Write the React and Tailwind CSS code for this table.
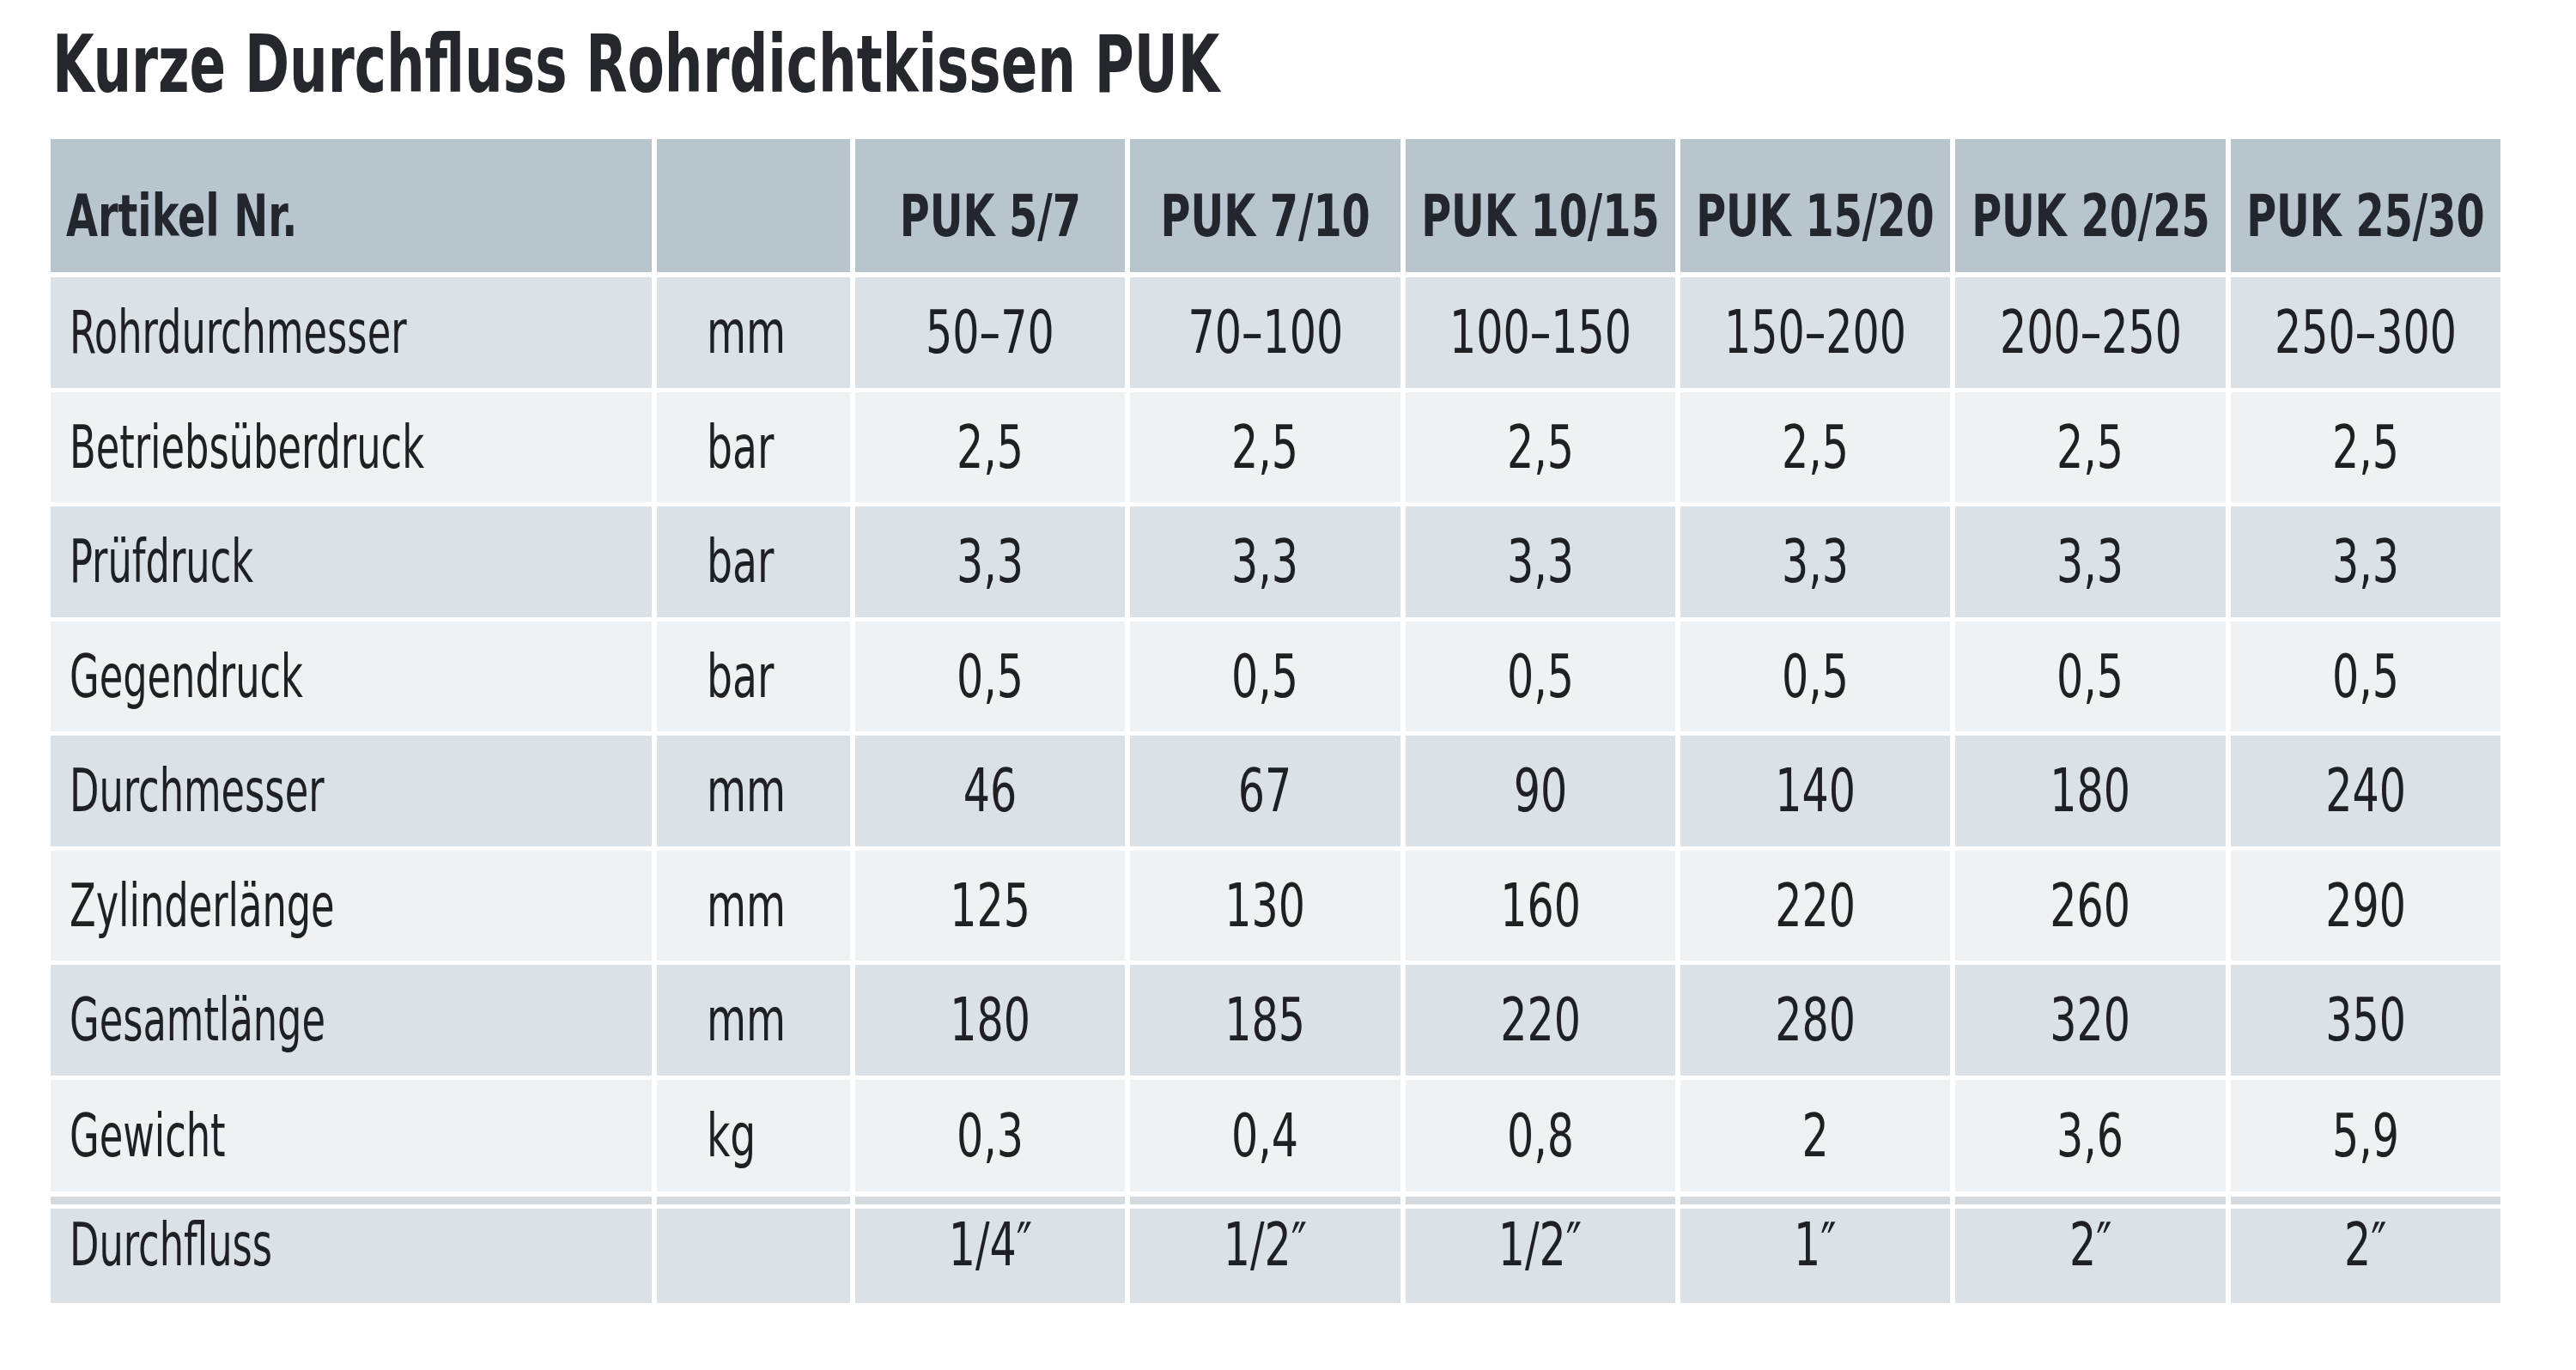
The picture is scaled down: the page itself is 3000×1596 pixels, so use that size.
import React from "react";

const cols = ["PUK 5/7", "PUK 7/10", "PUK 10/15", "PUK 15/20", "PUK 20/25", "PUK 25/30"];

const rows = [
  { label: "Rohrdurchmesser", unit: "mm", vals: ["50–70", "70–100", "100–150", "150–200", "200–250", "250–300"], dark: true },
  { label: "Betriebsüberdruck", unit: "bar", vals: ["2,5", "2,5", "2,5", "2,5", "2,5", "2,5"], dark: false },
  { label: "Prüfdruck", unit: "bar", vals: ["3,3", "3,3", "3,3", "3,3", "3,3", "3,3"], dark: true },
  { label: "Gegendruck", unit: "bar", vals: ["0,5", "0,5", "0,5", "0,5", "0,5", "0,5"], dark: false },
  { label: "Durchmesser", unit: "mm", vals: ["46", "67", "90", "140", "180", "240"], dark: true },
  { label: "Zylinderlänge", unit: "mm", vals: ["125", "130", "160", "220", "260", "290"], dark: false },
  { label: "Gesamtlänge", unit: "mm", vals: ["180", "185", "220", "280", "320", "350"], dark: true },
  { label: "Gewicht", unit: "kg", vals: ["0,3", "0,4", "0,8", "2", "3,6", "5,9"], dark: false },
];

const FONT = { fontFamily: '"Liberation Sans Narrow", "DejaVu Sans Condensed", "Liberation Sans", sans-serif' };

function Row({ label, unit, vals, dark, h, extra = "" }) {
  const bg = dark ? "bg-[#dae2e7]" : "bg-[#eef2f5]";
  return (
    <div className={`grid grid-cols-[700px_225px_repeat(6,minmax(0,1fr))] gap-x-[6px] ${h}`}>
      <div className={`${bg} flex items-center pl-[22px] whitespace-nowrap ${extra}`}>
        <span className="inline-block origin-left scale-x-[0.71]">{label}</span>
      </div>
      <div className={`${bg} flex items-center pl-[58px] whitespace-nowrap ${extra}`}>
        <span className="inline-block origin-left scale-x-[0.75]">{unit}</span>
      </div>
      {vals.map((v, i) => (
        <div key={i} className={`${bg} flex items-center justify-center whitespace-nowrap ${extra}`}>
          <span className="inline-block shrink-0 origin-center scale-x-[0.78]">{v}</span>
        </div>
      ))}
    </div>
  );
}

export default function App() {
  return (
    <div className="w-[3000px] h-[1596px] bg-white text-[#1e2024]" style={FONT}>
      <h1 className="pl-[61px] pt-[29px] text-[93px] leading-none font-bold text-[#24272b] whitespace-nowrap">
        <span className="inline-block origin-left scale-x-[0.75]">Kurze Durchfluss Rohrdichtkissen PUK</span>
      </h1>
      <div className="ml-[59px] mt-[40px] w-[2853px] flex flex-col text-[70px] leading-none">
        <div className="grid grid-cols-[700px_225px_repeat(6,minmax(0,1fr))] gap-x-[6px] h-[155px] font-bold text-[68px] text-[#23272d]">
          <div className="bg-[#b8c5cd] flex items-center pl-[18px] pt-[25px] whitespace-nowrap">
            <span className="inline-block origin-left scale-x-[0.78]">Artikel Nr.</span>
          </div>
          <div className="bg-[#b8c5cd]"></div>
          {cols.map((c) => (
            <div key={c} className="bg-[#b8c5cd] flex items-center justify-center pt-[25px] whitespace-nowrap">
              <span className="inline-block shrink-0 origin-center scale-x-[0.78]">{c}</span>
            </div>
          ))}
        </div>
        <div className="flex flex-col gap-y-[5px] mt-[6px]">
          {rows.map((r, i) => (
            <Row key={r.label} {...r} h={i === rows.length - 1 ? "h-[130px]" : "h-[128.5px]"} />
          ))}
        </div>
        <div className="grid grid-cols-[700px_225px_repeat(6,minmax(0,1fr))] gap-x-[6px] h-[9px] mt-[6px]">
          {Array.from({ length: 8 }).map((_, i) => (
            <div key={i} className="bg-[#d3dbdf]"></div>
          ))}
        </div>
        <div className="mt-[5px]">
          <Row label="Durchfluss" unit="" vals={["1/4″", "1/2″", "1/2″", "1″", "2″", "2″"]} dark h="h-[110px]" extra="pb-[26px]" />
        </div>
      </div>
    </div>
  );
}
